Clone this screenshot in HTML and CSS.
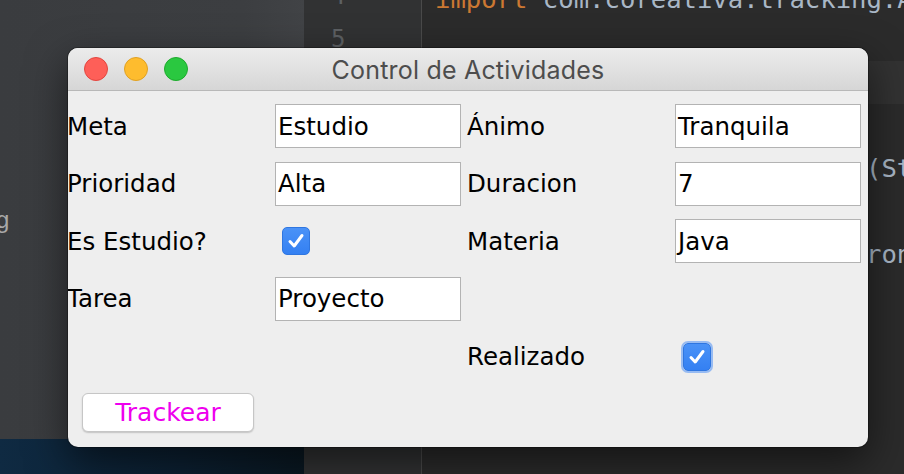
FILE: index.html
```html
<!DOCTYPE html>
<html lang="es">
<head>
<meta charset="utf-8">
<title>Control de Actividades</title>
<link rel="stylesheet" href="styles.css">
</head>
<body>
<div class="ide">
  <aside class="sidebar">
    <div class="tree">
      <div class="tree-item">g</div>
    </div>
    <div class="wallpaper"></div>
  </aside>
  <div class="gutter">
    <div class="ln first">4</div>
    <div class="ln">5</div>
  </div>
  <div class="editor">
    <div class="code first"><span class="kw">import</span> com.coreativa.tracking.Actividad;</div>
    <div class="code"></div>
    <div class="code current"></div>
    <div class="code"></div>
    <div class="code tail">(String[] args) {</div>
    <div class="code"></div>
    <div class="code tail">ronometro();</div>
    <div class="code"></div>
  </div>
</div>

<div class="window">
  <div class="titlebar">
    <div class="lights">
      <span class="light red"></span>
      <span class="light yellow"></span>
      <span class="light green"></span>
    </div>
    <div class="title">Control de Actividades</div>
    <div></div>
  </div>
  <div class="content">
    <div class="form">
      <label class="lbl">Meta</label>
      <div class="field">Estudio</div>
      <label class="lbl">Ánimo</label>
      <div class="field">Tranquila</div>

      <label class="lbl">Prioridad</label>
      <div class="field">Alta</div>
      <label class="lbl">Duracion</label>
      <div class="field">7</div>

      <label class="lbl">Es Estudio?</label>
      <div class="check"><svg viewBox="0 0 28 28" width="28" height="28"><path d="M8 14.5 L12.2 19 L20 8.5" fill="none" stroke="#fff" stroke-width="3" stroke-linecap="round" stroke-linejoin="round"/></svg></div>
      <label class="lbl">Materia</label>
      <div class="field">Java</div>

      <label class="lbl">Tarea</label>
      <div class="field">Proyecto</div>
      <span></span>
      <span></span>

      <span></span>
      <span></span>
      <label class="lbl">Realizado</label>
      <div class="check focus"><svg viewBox="0 0 28 28" width="28" height="28"><path d="M8 14.5 L12.2 19 L20 8.5" fill="none" stroke="#fff" stroke-width="3" stroke-linecap="round" stroke-linejoin="round"/></svg></div>
    </div>
    <button class="btn">Trackear</button>
  </div>
</div>
</body>
</html>
```

FILE: styles.css
```css
* { box-sizing: border-box; }

html, body {
  margin: 0;
  padding: 0;
  width: 904px;
  height: 474px;
  overflow: hidden;
  background: #2b2b2b;
}

.ide {
  display: flex;
  width: 904px;
  height: 474px;
}

.sidebar {
  width: 304px;
  flex: none;
  display: flex;
  flex-direction: column;
  background: linear-gradient(90deg, #3a3c3f 0%, #3c3e41 80%, #414346 100%);
  overflow: hidden;
}

.tree {
  flex: 1;
  padding-top: 206px;
}

.tree-item {
  font-family: "Liberation Sans", Arial, sans-serif;
  font-size: 24px;
  line-height: 28px;
  color: #a8a8a8;
  margin-left: -4px;
}

.wallpaper {
  height: 35px;
  background: linear-gradient(90deg, #0f2a42 0%, #0c2032 60%, #0a1822 100%);
}

.gutter {
  width: 118px;
  flex: none;
  background: #313233;
  border-right: 1px solid #4a4a4a;
  padding-left: 27px;
  overflow: hidden;
}

.ln {
  font-family: "DejaVu Sans Mono", monospace;
  font-size: 24px;
  line-height: 43px;
  color: #5d6063;
}

.ln.first { margin-top: -25px; }

.editor {
  flex: 1;
  background: #2b2b2b;
  overflow: hidden;
}

.code {
  font-family: "DejaVu Sans Mono", monospace;
  font-size: 25.6px;
  line-height: 43px;
  height: 43px;
  color: #a9b7c6;
  white-space: pre;
  padding-left: 13px;
}

.code.first {
  margin-top: -22px;
  height: 40px;
}

.code.tail { padding-left: 444px; }

.code.current { background: #323232; }

.kw { color: #cc7832; }

/* window */
.window {
  position: absolute;
  left: 68px;
  top: 48px;
  width: 800px;
  height: 399px;
  border-radius: 10px;
  background: #eeeeee;
  overflow: hidden;
  box-shadow: 0 0 0 1px rgba(0, 0, 0, 0.28), 0 14px 40px rgba(0, 0, 0, 0.55);
  display: flex;
  flex-direction: column;
}

.titlebar {
  height: 43px;
  flex: none;
  background: linear-gradient(#ececec, #d6d6d6);
  border-bottom: 1px solid #b8b8b8;
  display: grid;
  grid-template-columns: 1fr auto 1fr;
  align-items: center;
}

.lights {
  display: flex;
  gap: 16px;
  padding-left: 16px;
}

.light {
  width: 24px;
  height: 24px;
  border-radius: 50%;
  display: block;
}

.red { background: #fe5f58; border: 1px solid #e2463f; }
.yellow { background: #febc2e; border: 1px solid #dfa023; }
.green { background: #2ac840; border: 1px solid #1daa2c; }

.title {
  font-family: Inter, "Liberation Sans", sans-serif;
  font-size: 25px;
  color: #4d4d4d;
  letter-spacing: 0.2px;
  padding-top: 1px;
}

.content {
  flex: 1;
  padding: 13px 0 15px 1px;
  display: flex;
  flex-direction: column;
  align-items: flex-start;
}

.form {
  display: grid;
  grid-template-columns: 206px 194px 206px 186px;
  grid-auto-rows: 44px;
  row-gap: 13.5px;
  font-family: "DejaVu Sans", Verdana, sans-serif;
  font-size: 24.5px;
  color: #000;
}

.lbl {
  display: flex;
  align-items: center;
  margin-left: -2px;
}

.field {
  width: 186px;
  height: 44px;
  background: #fff;
  border: 1px solid #b3b3b3;
  padding: 0 2px;
  display: flex;
  align-items: center;
}

.check {
  width: 28px;
  height: 28px;
  margin-left: 7px;
  align-self: center;
  border-radius: 5px;
  background: linear-gradient(#4a92f7, #3480f2);
  border: 1px solid #2f76e0;
  display: flex;
  align-items: center;
  justify-content: center;
}

.check svg { display: block; flex: none; }

.check.focus {
  margin-left: 8px;
  margin-top: 2px;
  box-shadow: 0 0 0 2px rgba(105, 160, 245, 0.65);
}

.btn {
  margin-top: 15px;
  margin-left: 13px;
  width: 172px;
  height: 39px;
  background: #fff;
  border: 1px solid #c6c6c6;
  border-radius: 6px;
  box-shadow: 0 1px 1.5px rgba(0, 0, 0, 0.18);
  font-family: "DejaVu Sans", Verdana, sans-serif;
  font-size: 25px;
  color: #ee00ee;
  padding: 0;
  line-height: 37px;
}
```
